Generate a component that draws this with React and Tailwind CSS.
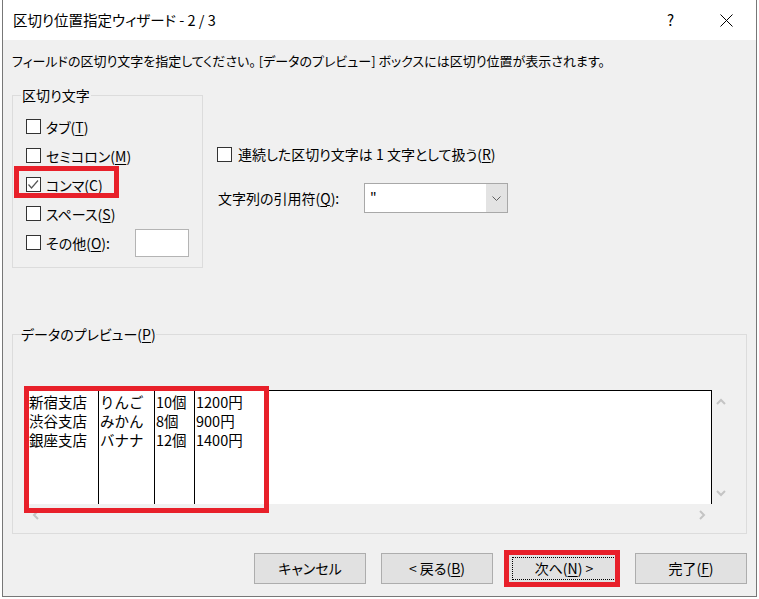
import React from 'react'

const ui = "[font-family:'Noto_Sans_CJK_JP','Noto_Sans',sans-serif] [font-feature-settings:'palt']"

function Mn({ c }) {
  return <span className="underline underline-offset-[2px] decoration-1">{c}</span>
}

function Check({ checked }) {
  return (
    <span className="w-[15px] h-[15px] shrink-0 border border-[#333] bg-white flex items-center justify-center">
      {checked && (
        <svg width="13" height="13" viewBox="0 0 13 13">
          <polyline points="1.5,6.5 4.5,10 11,2.5" fill="none" stroke="#555" strokeWidth="1.2" />
        </svg>
      )}
    </span>
  )
}

function Row({ checked, children }) {
  return (
    <div className="flex items-center h-[29px]">
      <Check checked={checked} />
      <span className="ml-[5px]">{children}</span>
    </div>
  )
}

function Chevron({ dir, className }) {
  const pts = {
    up: '1,6 5,2 9,6',
    down: '1,2 5,6 9,2',
    left: '6,1 2,5 6,9',
    right: '2,1 6,5 2,9',
  }[dir]
  const v = dir === 'up' || dir === 'down'
  return (
    <svg width={v ? 10 : 8} height={v ? 8 : 10} viewBox={v ? '0 0 10 8' : '0 0 8 10'} className={className}>
      <polyline points={pts} fill="none" stroke="#c4c4c4" strokeWidth="2" />
    </svg>
  )
}

function Btn({ children, focus }) {
  return (
    <button
      className={`w-[112px] h-[31px] bg-[#e1e1e1] border border-[#adadad] text-[14px] text-black flex items-center justify-center ${
        focus ? 'outline outline-1 outline-dotted outline-black outline-offset-[-5px]' : ''
      }`}
    >
      {children}
    </button>
  )
}

const rows = [
  ['新宿支店', 'りんご', '10個', '1200円'],
  ['渋谷支店', 'みかん', '8個', '900円'],
  ['銀座支店', 'バナナ', '12個', '1400円'],
]

export default function App() {
  return (
    <div className={`relative w-[759px] h-[599px] bg-white overflow-hidden text-black ${ui}`}>
      <div className="ml-[2px] w-[755px] h-[597px] border-l border-r border-b border-[#777] bg-[#f0f0f0] flex flex-col">
        {/* title bar */}
        <div className="h-[40px] bg-white flex items-center pl-[10px] pr-[23px] shrink-0">
          <span className="text-[14.5px] leading-[20px]">区切り位置指定ウィザード - 2 / 3</span>
          <span className="ml-auto text-[15px] leading-[20px]">?</span>
          <svg width="13" height="13" viewBox="0 0 13 13" className="ml-[46px]">
            <path d="M0.5 0.5 L12.5 12.5 M12.5 0.5 L0.5 12.5" stroke="#000" strokeWidth="1" />
          </svg>
        </div>

        <div className="px-[9px] flex flex-col">
          <p className="mt-[13px] text-[13px] leading-[16px]">
            フィールドの区切り文字を指定してください。 [データのプレビュー] ボックスには区切り位置が表示されます。
          </p>

          <div className="mt-[18px] flex items-start">
            <fieldset className="w-[191px] min-w-0 border border-[#dcdcdc] text-[14px] leading-[16px]">
              <legend className="ml-[8px] px-[1px] leading-[16px]">区切り文字</legend>
              <div className="pt-[9px] pb-[10px] pl-[13px] pr-[13px] flex flex-col">
                <Row>タブ(<Mn c="T" />)</Row>
                <Row>セミコロン(<Mn c="M" />)</Row>
                <Row checked>コンマ(<Mn c="C" />)</Row>
                <Row>スペース(<Mn c="S" />)</Row>
                <div className="flex items-center h-[29px]">
                  <Check />
                  <span className="ml-[5px]">その他(<Mn c="O" />):</span>
                  <span className="ml-auto w-[54px] h-[28px] bg-white border border-[#b4b4b4]" />
                </div>
              </div>
            </fieldset>

            <div className="ml-[14px] pt-[57px] flex flex-col text-[14px] leading-[16px]">
              <div className="flex items-center h-[20px]">
                <Check />
                <span className="ml-[6px]">連続した区切り文字は 1 文字として扱う(<Mn c="R" />)</span>
              </div>
              <div className="mt-[19px] flex items-center h-[30px]">
                <span className="w-[147px] pl-[1px]">文字列の引用符(<Mn c="Q" />):</span>
                <div className="w-[144px] h-[30px] border border-[#a8a8a8] bg-white flex">
                  <span className="flex-1 pl-[5px] leading-[26px] text-[14px]">"</span>
                  <span className="w-[21px] h-full bg-[#e3e3e3] flex items-center justify-center">
                    <svg width="9" height="5" viewBox="0 0 9 5">
                      <polyline points="0.5,0.5 4.5,4.5 8.5,0.5" fill="none" stroke="#606060" strokeWidth="1" />
                    </svg>
                  </span>
                </div>
              </div>
            </div>
          </div>

          <fieldset className="mt-[58px] min-w-0 border border-[#dcdcdc] text-[14px] leading-[16px]">
            <legend className="ml-[8px] px-[0px] leading-[16px]">データのプレビュー(<Mn c="P" />)</legend>
            <div className="mt-[48px] ml-[14px] pb-[7px] grid grid-cols-[685px_17px] grid-rows-[114px_22px]">
              <div className="bg-white border-t border-r border-black flex text-[14.5px] leading-[19px] [font-feature-settings:normal]">
                <div className="w-[72px] border-r border-black pl-[2px] pt-[1px]">
                  {rows.map((r) => <div key={r[0]}>{r[0]}</div>)}
                </div>
                <div className="w-[56px] border-r border-black pl-[1px] pt-[1px]">
                  {rows.map((r) => <div key={r[1]}>{r[1]}</div>)}
                </div>
                <div className="w-[40px] border-r border-black pl-[1px] pt-[1px]">
                  {rows.map((r) => <div key={r[2]}>{r[2]}</div>)}
                </div>
                <div className="pl-[1px] pt-[1px]">
                  {rows.map((r) => <div key={r[3]}>{r[3]}</div>)}
                </div>
              </div>
              <div className="flex flex-col items-center justify-between pt-[8px] pb-[7px]">
                <Chevron dir="up" />
                <Chevron dir="down" />
              </div>
              <div className="flex items-center justify-between pl-[5px] pr-[6px]">
                <Chevron dir="left" />
                <Chevron dir="right" />
              </div>
              <div />
            </div>
          </fieldset>

          <div className="mt-[19px] flex justify-end gap-[15px]">
            <Btn>キャンセル</Btn>
            <Btn>&lt; 戻る(<Mn c="B" />)</Btn>
            <Btn focus>次へ(<Mn c="N" />) &gt;</Btn>
            <Btn>完了(<Mn c="F" />)</Btn>
          </div>
        </div>
      </div>

      {/* red annotation boxes */}
      <div className="absolute left-[14px] top-[166px] w-[105px] h-[32px] border-[5px] border-[#e8202a] pointer-events-none" />
      <div className="absolute left-[24px] top-[386px] w-[245px] h-[127px] border-[5px] border-[#e8202a] pointer-events-none" />
      <div className="absolute left-[504px] top-[550px] w-[116px] h-[37px] border-[5px] border-[#e8202a] pointer-events-none" />
    </div>
  )
}
